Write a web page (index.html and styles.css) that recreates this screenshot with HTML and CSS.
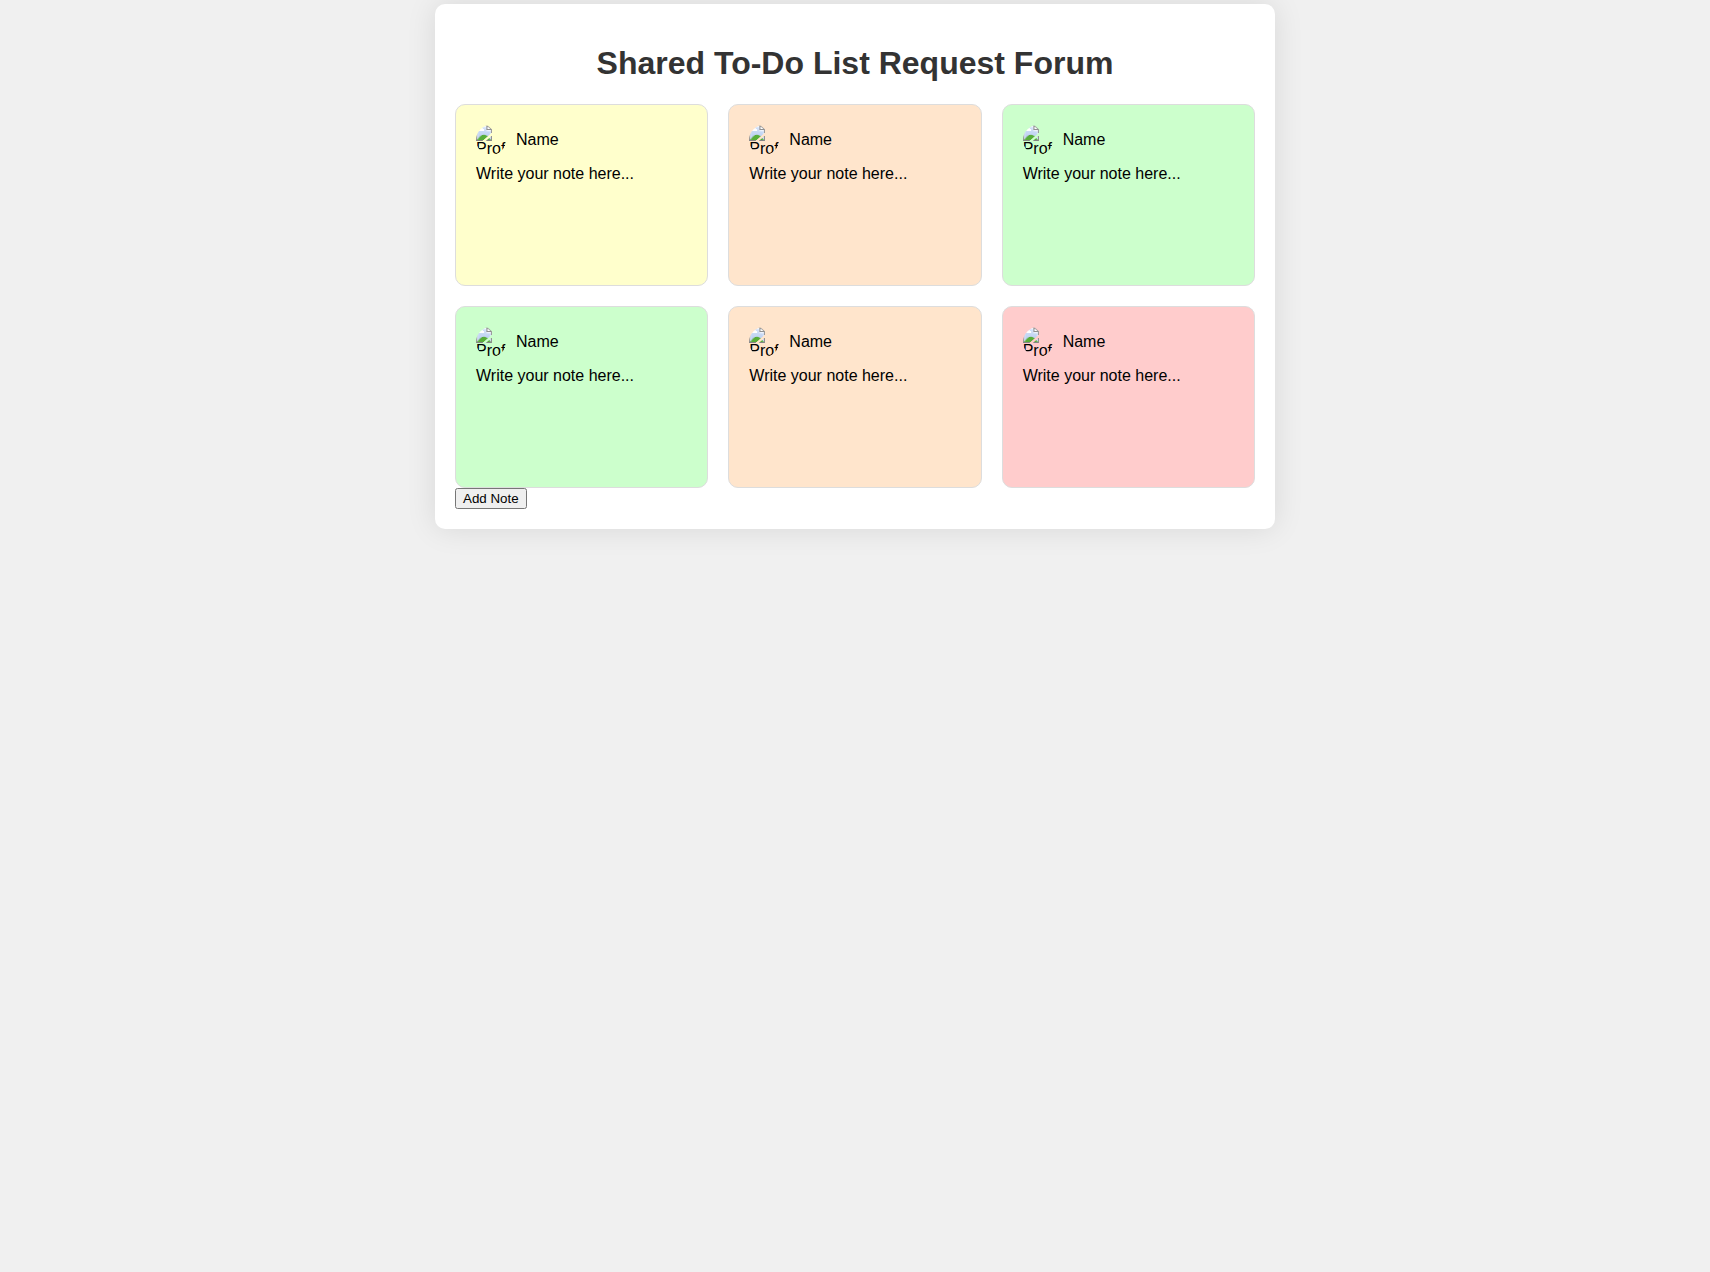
FILE: index.html
```html
<!DOCTYPE html>
<html lang="en">
<head>
<meta charset="utf-8">
<title>Shared To-Do List Request Forum</title>
<link rel="stylesheet" href="styles.css">
</head>
<body>
<div class="container">
<h1>Shared To-Do List Request Forum</h1>
<div class="notes">
<div class="note yellow"><div class="profile"><img alt="Profile Picture" src="profile.jpg"><span>Name</span></div><div class="text">Write your note here...</div></div>
<div class="note orange"><div class="profile"><img alt="Profile Picture" src="profile.jpg"><span>Name</span></div><div class="text">Write your note here...</div></div>
<div class="note green"><div class="profile"><img alt="Profile Picture" src="profile.jpg"><span>Name</span></div><div class="text">Write your note here...</div></div>
<div class="note green"><div class="profile"><img alt="Profile Picture" src="profile.jpg"><span>Name</span></div><div class="text">Write your note here...</div></div>
<div class="note orange"><div class="profile"><img alt="Profile Picture" src="profile.jpg"><span>Name</span></div><div class="text">Write your note here...</div></div>
<div class="note red"><div class="profile"><img alt="Profile Picture" src="profile.jpg"><span>Name</span></div><div class="text">Write your note here...</div></div>
</div>
<button class="add">Add Note</button>
</div>
</body>
</html>
```
FILE: styles.css
```css
body { margin: 0; padding-top: 4px; min-height: 100vh; box-sizing: border-box; background: #f0f0f0; font-family: "Liberation Sans", Arial, sans-serif; }
.container { width: 800px; margin: 0 auto; padding: 20px; background: #fff; border-radius: 10px; box-shadow: 0 0 30px rgba(0,0,0,.1); }
h1 { margin: 21.44px 0; font-size: 32px; line-height: 36px; padding-bottom: 1px; text-align: center; color: #333; }
.notes { display: grid; grid-template-columns: repeat(3, 1fr); gap: 20px; }
.note { height: 140px; padding: 20px; border: 1px solid #ddd; border-radius: 10px; }
.yellow { background: #ffc; }
.orange { background: #ffe5cc; }
.green { background: #cfc; }
.red { background: #fcc; }
.profile { display: flex; align-items: center; margin-bottom: 10px; }
.profile img { width: 30px; height: 30px; border-radius: 50%; margin-right: 10px; line-height: 16px; }
.add { display: block; font: 13.333px "Liberation Sans", Arial, sans-serif; }
```
